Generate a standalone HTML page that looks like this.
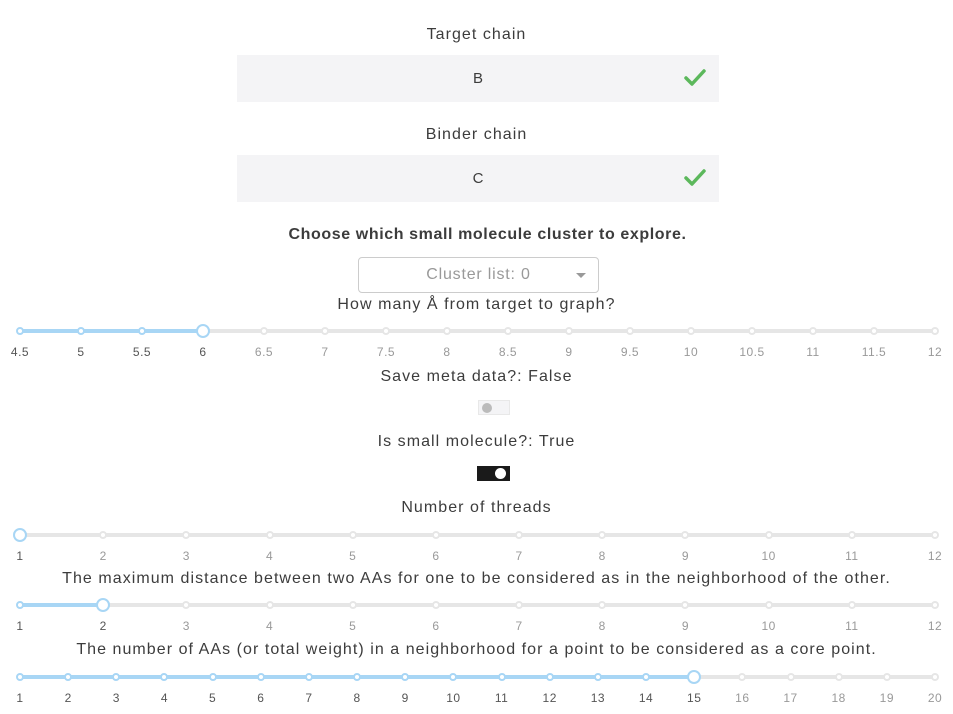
<!DOCTYPE html>
<html><head><meta charset="utf-8"><style>
*{margin:0;padding:0;box-sizing:border-box}
body{width:953px;height:714px;background:#fff;font-family:"Liberation Sans",sans-serif;color:#3c3c3c;position:relative;overflow:hidden}
.t{position:absolute;left:0;width:953px;text-align:center;font-size:16px;letter-spacing:1.05px;white-space:nowrap}
.box{position:absolute;left:237px;width:482px;height:47px;background:#f4f4f6;text-align:center;line-height:47px;font-size:15px}
.box svg{position:absolute;right:12px;top:13px}
.s{position:absolute;left:20px;width:915px;height:0}
.tr{position:absolute;left:0;right:0;top:-2px;height:4px;background:#e6e6e6;border-radius:2px}
.fl{position:absolute;left:0;top:-2px;height:4px;background:#a8d6f5;border-radius:2px}
.d{position:absolute;width:8px;height:8px;margin:-4px 0 0 -4px;border-radius:50%;background:#fff;border:2px solid #e6e6e6}
.d.a{border-color:#a8d6f5}
.h{position:absolute;width:14px;height:14px;margin:-7px 0 0 -7px;border-radius:50%;background:#fff;border:2px solid #a8d6f5}
.l{position:absolute;width:40px;margin-left:-20px;text-align:center;font-size:12px;top:14px;color:#999;letter-spacing:0.5px}
.l.a{color:#555}
</style></head><body>
<div class="t" style="top:26px">Target chain</div>
<div class="box" style="top:55px">B<svg width="24" height="20" viewBox="0 0 24 20"><path d="M3 10 L9 16 L21 3" fill="none" stroke="#5cb85c" stroke-width="3.5" stroke-linecap="round" stroke-linejoin="round"/></svg></div>
<div class="t" style="top:126px">Binder chain</div>
<div class="box" style="top:155px">C<svg width="24" height="20" viewBox="0 0 24 20"><path d="M3 10 L9 16 L21 3" fill="none" stroke="#5cb85c" stroke-width="3.5" stroke-linecap="round" stroke-linejoin="round"/></svg></div>
<div class="t" style="top:226px;left:11px;font-weight:bold;letter-spacing:0.6px">Choose which small molecule cluster to explore.</div>
<div style="position:absolute;left:358px;top:257px;width:241px;height:36px;border:1px solid #ccc;border-radius:4px;text-align:center;line-height:34px;font-size:16px;letter-spacing:0.8px;color:#999">Cluster list: 0<span style="position:absolute;right:12px;top:15px;width:0;height:0;border-left:5px solid transparent;border-right:5px solid transparent;border-top:5px solid #999"></span></div>
<div class="t" style="top:296px">How many Å from target to graph?</div>

<div class="s" style="top:331px"><div class="tr"></div><div class="fl" style="width:20%"></div>
<div class="d a" style="left:0%"></div><div class="d a" style="left:6.667%"></div><div class="d a" style="left:13.333%"></div><div class="d" style="left:26.667%"></div><div class="d" style="left:33.333%"></div><div class="d" style="left:40%"></div><div class="d" style="left:46.667%"></div><div class="d" style="left:53.333%"></div><div class="d" style="left:60%"></div><div class="d" style="left:66.667%"></div><div class="d" style="left:73.333%"></div><div class="d" style="left:80%"></div><div class="d" style="left:86.667%"></div><div class="d" style="left:93.333%"></div><div class="d" style="left:100%"></div><div class="h" style="left:20%"></div>
<div class="l a" style="left:0%">4.5</div><div class="l a" style="left:6.667%">5</div><div class="l a" style="left:13.333%">5.5</div><div class="l a" style="left:20%">6</div><div class="l" style="left:26.667%">6.5</div><div class="l" style="left:33.333%">7</div><div class="l" style="left:40%">7.5</div><div class="l" style="left:46.667%">8</div><div class="l" style="left:53.333%">8.5</div><div class="l" style="left:60%">9</div><div class="l" style="left:66.667%">9.5</div><div class="l" style="left:73.333%">10</div><div class="l" style="left:80%">10.5</div><div class="l" style="left:86.667%">11</div><div class="l" style="left:93.333%">11.5</div><div class="l" style="left:100%">12</div>
</div>

<div class="t" style="top:368px">Save meta data?: False</div>
<div style="position:absolute;left:478px;top:400px;width:32px;height:15px;background:#f4f4f6;border:1px solid #e8e8e8"><div style="position:absolute;left:3px;top:2px;width:10px;height:10px;border-radius:50%;background:#bbb"></div></div>
<div class="t" style="top:433px">Is small molecule?: True</div>
<div style="position:absolute;left:477px;top:466px;width:33px;height:15px;background:#1a1a1a"><div style="position:absolute;right:4px;top:2px;width:11px;height:11px;border-radius:50%;background:#fff"></div></div>
<div class="t" style="top:499px">Number of threads</div>

<div class="s" style="top:535px"><div class="tr"></div>
<div class="d" style="left:9.091%"></div><div class="d" style="left:18.182%"></div><div class="d" style="left:27.273%"></div><div class="d" style="left:36.364%"></div><div class="d" style="left:45.455%"></div><div class="d" style="left:54.545%"></div><div class="d" style="left:63.636%"></div><div class="d" style="left:72.727%"></div><div class="d" style="left:81.818%"></div><div class="d" style="left:90.909%"></div><div class="d" style="left:100%"></div><div class="h" style="left:0%"></div>
<div class="l a" style="left:0%">1</div><div class="l" style="left:9.091%">2</div><div class="l" style="left:18.182%">3</div><div class="l" style="left:27.273%">4</div><div class="l" style="left:36.364%">5</div><div class="l" style="left:45.455%">6</div><div class="l" style="left:54.545%">7</div><div class="l" style="left:63.636%">8</div><div class="l" style="left:72.727%">9</div><div class="l" style="left:81.818%">10</div><div class="l" style="left:90.909%">11</div><div class="l" style="left:100%">12</div>
</div>

<div class="t" style="top:570px">The maximum distance between two AAs for one to be considered as in the neighborhood of the other.</div>

<div class="s" style="top:605px"><div class="tr"></div><div class="fl" style="width:9.091%"></div>
<div class="d a" style="left:0%"></div><div class="d" style="left:18.182%"></div><div class="d" style="left:27.273%"></div><div class="d" style="left:36.364%"></div><div class="d" style="left:45.455%"></div><div class="d" style="left:54.545%"></div><div class="d" style="left:63.636%"></div><div class="d" style="left:72.727%"></div><div class="d" style="left:81.818%"></div><div class="d" style="left:90.909%"></div><div class="d" style="left:100%"></div><div class="h" style="left:9.091%"></div>
<div class="l a" style="left:0%">1</div><div class="l a" style="left:9.091%">2</div><div class="l" style="left:18.182%">3</div><div class="l" style="left:27.273%">4</div><div class="l" style="left:36.364%">5</div><div class="l" style="left:45.455%">6</div><div class="l" style="left:54.545%">7</div><div class="l" style="left:63.636%">8</div><div class="l" style="left:72.727%">9</div><div class="l" style="left:81.818%">10</div><div class="l" style="left:90.909%">11</div><div class="l" style="left:100%">12</div>
</div>

<div class="t" style="top:641px">The number of AAs (or total weight) in a neighborhood for a point to be considered as a core point.</div>

<div class="s" style="top:677px"><div class="tr"></div><div class="fl" style="width:73.684%"></div>
<div class="d a" style="left:0%"></div><div class="d a" style="left:5.263%"></div><div class="d a" style="left:10.526%"></div><div class="d a" style="left:15.789%"></div><div class="d a" style="left:21.053%"></div><div class="d a" style="left:26.316%"></div><div class="d a" style="left:31.579%"></div><div class="d a" style="left:36.842%"></div><div class="d a" style="left:42.105%"></div><div class="d a" style="left:47.368%"></div><div class="d a" style="left:52.632%"></div><div class="d a" style="left:57.895%"></div><div class="d a" style="left:63.158%"></div><div class="d a" style="left:68.421%"></div><div class="d" style="left:78.947%"></div><div class="d" style="left:84.211%"></div><div class="d" style="left:89.474%"></div><div class="d" style="left:94.737%"></div><div class="d" style="left:100%"></div><div class="h" style="left:73.684%"></div>
<div class="l a" style="left:0%">1</div><div class="l a" style="left:5.263%">2</div><div class="l a" style="left:10.526%">3</div><div class="l a" style="left:15.789%">4</div><div class="l a" style="left:21.053%">5</div><div class="l a" style="left:26.316%">6</div><div class="l a" style="left:31.579%">7</div><div class="l a" style="left:36.842%">8</div><div class="l a" style="left:42.105%">9</div><div class="l a" style="left:47.368%">10</div><div class="l a" style="left:52.632%">11</div><div class="l a" style="left:57.895%">12</div><div class="l a" style="left:63.158%">13</div><div class="l a" style="left:68.421%">14</div><div class="l a" style="left:73.684%">15</div><div class="l" style="left:78.947%">16</div><div class="l" style="left:84.211%">17</div><div class="l" style="left:89.474%">18</div><div class="l" style="left:94.737%">19</div><div class="l" style="left:100%">20</div>
</div>
</body></html>
